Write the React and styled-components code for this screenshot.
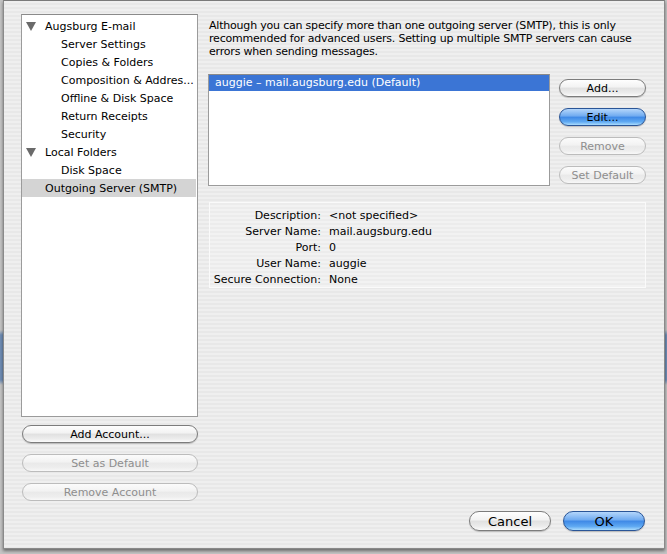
import React from "react";
import styled, { createGlobalStyle, css } from "styled-components";

const GlobalStyle = createGlobalStyle`
  html, body {
    margin: 0;
    padding: 0;
    background: #b9b9b9;
  }
  body {
    font-family: "DejaVu Sans", "Liberation Sans", sans-serif;
    font-size: 11px;
    color: #000;
  }
`;

const tree = [
  { label: "Augsburg E-mail", level: 0, open: true },
  { label: "Server Settings", level: 1 },
  { label: "Copies & Folders", level: 1 },
  { label: "Composition & Addres...", level: 1 },
  { label: "Offline & Disk Space", level: 1 },
  { label: "Return Receipts", level: 1 },
  { label: "Security", level: 1 },
  { label: "Local Folders", level: 0, open: true },
  { label: "Disk Space", level: 1 },
  { label: "Outgoing Server (SMTP)", level: 0, selected: true },
];

const intro = [
  "Although you can specify more than one outgoing server (SMTP), this is only",
  "recommended for advanced users. Setting up multiple SMTP servers can cause",
  "errors when sending messages.",
];

const details = [
  ["Description:", "<not specified>"],
  ["Server Name:", "mail.augsburg.edu"],
  ["Port:", "0"],
  ["User Name:", "auggie"],
  ["Secure Connection:", "None"],
];

function App() {
  return (
    <Screen>
      <GlobalStyle />
      <Window>
        <Main>
          <LeftCol>
            <Tree>
              {tree.map((item) => (
                <TreeRow key={item.label} $selected={item.selected}>
                  <Twisty>{item.open ? <Triangle /> : null}</Twisty>
                  <TreeLabel $level={item.level}>{item.label}</TreeLabel>
                </TreeRow>
              ))}
            </Tree>
            <LeftButtons>
              <AquaButton $wide>Add Account...</AquaButton>
              <AquaButton $wide disabled>Set as Default</AquaButton>
              <AquaButton $wide disabled>Remove Account</AquaButton>
            </LeftButtons>
          </LeftCol>
          <RightCol>
            <Intro>
              {intro.map((line) => (
                <IntroLine key={line}>{line}</IntroLine>
              ))}
            </Intro>
            <ServerArea>
              <ServerList>
                <ServerRow $selected>auggie – mail.augsburg.edu (Default)</ServerRow>
              </ServerList>
              <SideButtons>
                <AquaButton>Add...</AquaButton>
                <AquaButton $primary>Edit...</AquaButton>
                <AquaButton disabled>Remove</AquaButton>
                <AquaButton disabled>Set Default</AquaButton>
              </SideButtons>
            </ServerArea>
            <DetailsBox>
              {details.map(([k, v]) => (
                <React.Fragment key={k}>
                  <DetailLabel>{k}</DetailLabel>
                  <DetailValue>{v}</DetailValue>
                </React.Fragment>
              ))}
            </DetailsBox>
          </RightCol>
        </Main>
        <Footer>
          <AquaButton $big>Cancel</AquaButton>
          <AquaButton $big $primary>OK</AquaButton>
        </Footer>
      </Window>
    </Screen>
  );
}

export default App;

const Screen = styled.div`
  width: 667px;
  height: 554px;
  padding-left: 3px;
  box-sizing: border-box;
  background: linear-gradient(
    to bottom,
    #c4c4c4 0,
    #c4c4c4 330px,
    #6f8db5 335px,
    #6f8db5 380px,
    #c4c4c4 385px
  );
  overflow: hidden;
`;

const Window = styled.div`
  width: 662px;
  height: 549px;
  box-sizing: border-box;
  border: 1px solid #8a8a8a;
  border-top-color: #7a7a7a;
  box-shadow: 0 2px 3px rgba(0, 0, 0, 0.45);
  background: repeating-linear-gradient(
    to bottom,
    #efefef 0,
    #efefef 2px,
    #e8e8e8 2px,
    #e8e8e8 4px
  );
  display: flex;
  flex-direction: column;
`;

const Main = styled.div`
  display: flex;
  gap: 10px;
  padding: 13px 0 0 17px;
  flex: 1;
`;

const LeftCol = styled.div`
  width: 177px;
  display: flex;
  flex-direction: column;
`;

const Tree = styled.div`
  height: 403px;
  box-sizing: border-box;
  background: #fff;
  border: 1px solid #9b9b9b;
  border-top-color: #8a8a8a;
  padding-top: 2px;
`;

const TreeRow = styled.div`
  height: 18px;
  display: flex;
  align-items: center;
  background: ${(p) => (p.$selected ? "#d4d4d4" : "transparent")};
  margin-right: 1px;
`;

const Twisty = styled.span`
  width: 23px;
  display: flex;
  justify-content: flex-start;
  padding-left: 4px;
  box-sizing: border-box;
`;

const Triangle = styled.span`
  width: 0;
  height: 0;
  border-left: 5px solid transparent;
  border-right: 5px solid transparent;
  border-top: 9px solid #6a6a6a;
`;

const TreeLabel = styled.span`
  padding-left: ${(p) => (p.$level ? 16 : 0)}px;
  white-space: nowrap;
`;

const LeftButtons = styled.div`
  display: flex;
  flex-direction: column;
  gap: 11px;
  margin-top: 8px;
  padding-left: 1px;
`;

const AquaButton = styled.button`
  font-family: inherit;
  font-size: ${(p) => (p.$big ? "13px" : "11px")};
  height: ${(p) => (p.$big ? "20px" : "18px")};
  width: ${(p) => (p.$wide ? "176px" : p.$big ? "82px" : "87px")};
  padding: 0;
  border-radius: 10px;
  border: 1px solid #7c7c7c;
  color: #000;
  line-height: 1;
  background: linear-gradient(
    to bottom,
    #fefefe 0%,
    #f2f2f2 45%,
    #e0e0e0 50%,
    #ececec 80%,
    #fbfbfb 100%
  );
  box-shadow: 0 1px 1px rgba(0, 0, 0, 0.2);
  cursor: default;
  ${(p) =>
    p.$primary &&
    css`
      border-color: #2a5597;
      background: linear-gradient(
        to bottom,
        #b4d6fb 0%,
        #6eaaf0 45%,
        #3e88e6 50%,
        #5fa9f2 80%,
        #aadcfd 100%
      );
    `}
  &:disabled {
    color: #8e8e8e;
    border-color: #bcbcbc;
    box-shadow: none;
    background: linear-gradient(
      to bottom,
      #fbfbfb 0%,
      #f2f2f2 45%,
      #e9e9e9 50%,
      #eeeeee 80%,
      #f8f8f8 100%
    );
  }
`;

const RightCol = styled.div`
  width: 438px;
  display: flex;
  flex-direction: column;
`;

const Intro = styled.div`
  margin: 5px 0 0 1px;
  line-height: 13px;
  letter-spacing: -0.2px;
`;

const IntroLine = styled.div`
  white-space: nowrap;
`;

const ServerArea = styled.div`
  display: flex;
  gap: 9px;
  margin-top: 16px;
`;

const ServerList = styled.div`
  width: 342px;
  height: 112px;
  box-sizing: border-box;
  background: #fff;
  border: 1px solid #9b9b9b;
  border-top-color: #8a8a8a;
`;

const ServerRow = styled.div`
  height: 16px;
  line-height: 16px;
  padding-left: 6px;
  color: ${(p) => (p.$selected ? "#fff" : "#000")};
  background: ${(p) => (p.$selected ? "#3b75d5" : "transparent")};
`;

const SideButtons = styled.div`
  display: flex;
  flex-direction: column;
  gap: 11px;
  padding-top: 5px;
`;

const DetailsBox = styled.div`
  margin-top: 16px;
  margin-left: 1px;
  width: 437px;
  box-sizing: border-box;
  height: 86px;
  border: 1px solid #fafafa;
  background: rgba(255, 255, 255, 0.18);
  padding-top: 4px;
  display: grid;
  grid-template-columns: 111px 1fr;
  grid-auto-rows: 16px;
  column-gap: 8px;
  align-items: center;
`;

const DetailLabel = styled.span`
  text-align: right;
  white-space: nowrap;
`;

const DetailValue = styled.span`
  white-space: nowrap;
`;

const Footer = styled.div`
  display: flex;
  justify-content: flex-end;
  gap: 12px;
  padding: 0 19px 17px 0;
`;
